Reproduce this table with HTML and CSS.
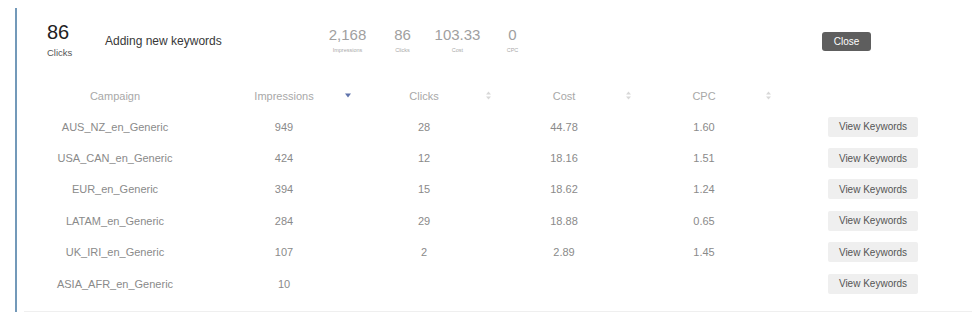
FILE: index.html
```html
<!DOCTYPE html>
<html>
<head>
<meta charset="utf-8">
<link rel="stylesheet" href="styles.css">
</head>
<body>
<div class="panel">
  <div class="inner">
    <div class="header">
      <div class="big">
        <div class="big-num">86</div>
        <div class="big-label">Clicks</div>
      </div>
      <div class="title">Adding new keywords</div>
      <div class="stats">
        <div class="stat"><div class="stat-num">2,168</div><div class="stat-label">Impressions</div></div>
        <div class="stat"><div class="stat-num">86</div><div class="stat-label">Clicks</div></div>
        <div class="stat"><div class="stat-num">103.33</div><div class="stat-label">Cost</div></div>
        <div class="stat"><div class="stat-num">0</div><div class="stat-label">CPC</div></div>
      </div>
      <button class="close">Close</button>
    </div>

    <div class="table">
      <div class="row head">
        <div class="cell first">Campaign</div>
        <div class="cell sortable"><span></span><span>Impressions</span><span class="sort"><svg width="6" height="5" viewBox="0 0 6 5"><path d="M0 0.5h6L3 4.5z" fill="#5f73ab"/></svg></span></div>
        <div class="cell sortable"><span></span><span>Clicks</span><span class="sort"><svg width="5" height="9" viewBox="0 0 5 9"><path d="M0 3.5h5L2.5 0.5zM0 5.5h5L2.5 8.5z" fill="#d8d8d8"/></svg></span></div>
        <div class="cell sortable"><span></span><span>Cost</span><span class="sort"><svg width="5" height="9" viewBox="0 0 5 9"><path d="M0 3.5h5L2.5 0.5zM0 5.5h5L2.5 8.5z" fill="#d8d8d8"/></svg></span></div>
        <div class="cell sortable"><span></span><span>CPC</span><span class="sort"><svg width="5" height="9" viewBox="0 0 5 9"><path d="M0 3.5h5L2.5 0.5zM0 5.5h5L2.5 8.5z" fill="#d8d8d8"/></svg></span></div>
        <div class="cell"></div>
      </div>

      <div class="row">
        <div class="cell first">AUS_NZ_en_Generic</div>
        <div class="cell">949</div><div class="cell">28</div><div class="cell">44.78</div><div class="cell">1.60</div>
        <div class="cell"><button class="view">View Keywords</button></div>
      </div>
      <div class="row">
        <div class="cell first">USA_CAN_en_Generic</div>
        <div class="cell">424</div><div class="cell">12</div><div class="cell">18.16</div><div class="cell">1.51</div>
        <div class="cell"><button class="view">View Keywords</button></div>
      </div>
      <div class="row">
        <div class="cell first">EUR_en_Generic</div>
        <div class="cell">394</div><div class="cell">15</div><div class="cell">18.62</div><div class="cell">1.24</div>
        <div class="cell"><button class="view">View Keywords</button></div>
      </div>
      <div class="row">
        <div class="cell first">LATAM_en_Generic</div>
        <div class="cell">284</div><div class="cell">29</div><div class="cell">18.88</div><div class="cell">0.65</div>
        <div class="cell"><button class="view">View Keywords</button></div>
      </div>
      <div class="row">
        <div class="cell first">UK_IRI_en_Generic</div>
        <div class="cell">107</div><div class="cell">2</div><div class="cell">2.89</div><div class="cell">1.45</div>
        <div class="cell"><button class="view">View Keywords</button></div>
      </div>
      <div class="row">
        <div class="cell first">ASIA_AFR_en_Generic</div>
        <div class="cell">10</div><div class="cell"></div><div class="cell"></div><div class="cell"></div>
        <div class="cell"><button class="view">View Keywords</button></div>
      </div>
    </div>
  </div>
</div>
</body>
</html>
```

FILE: styles.css
```css
html, body {
  margin: 0;
  padding: 0;
  background: #ffffff;
  font-family: "Liberation Sans", Arial, sans-serif;
}

.panel {
  margin: 8px 0 0 15px;
  border-left: 2px solid #7399b9;
  width: 955px;
}

.inner {
  margin-left: 7px;
  width: 948px;
  border-bottom: 1px solid #efefef;
  padding-bottom: 12px;
}

.header {
  display: flex;
  align-items: flex-start;
  height: 72px;
  padding-left: 23px;
}

.big {
  width: 58px;
  margin-top: 14px;
}

.big-num {
  font-size: 20px;
  line-height: 20px;
  color: #222;
}

.big-label {
  font-size: 9.5px;
  line-height: 12px;
  color: #555;
  margin-top: 5px;
}

.title {
  width: 215px;
  margin-top: 25.5px;
  font-size: 12px;
  line-height: 14px;
  color: #383838;
}

.stats {
  display: flex;
  margin-top: 17.5px;
}

.stat {
  width: 55px;
  text-align: center;
}

.stat-num {
  font-size: 15px;
  line-height: 18px;
  color: #a0a0a0;
}

.stat-label {
  font-size: 5.5px;
  line-height: 8px;
  color: #aaa;
  margin-top: 2.5px;
}

.close {
  margin-left: 282px;
  margin-top: 24px;
  width: 49px;
  height: 19px;
  border: 0;
  border-radius: 3px;
  background: #5e5e5e;
  color: #fff;
  font-family: "Liberation Sans", Arial, sans-serif;
  font-size: 10px;
  padding: 0;
}

.table {
  display: flex;
  flex-direction: column;
}

.row {
  display: grid;
  grid-template-columns: 190px 140px 140px 140px 140px 198px;
  height: 31.4px;
  align-items: center;
  font-size: 11px;
  color: #8a8a8a;
}

.row.head {
  height: 31px;
  color: #a8a8a8;
}

.cell {
  text-align: center;
}

.cell.first {
  padding-right: 8px;
}

.sortable {
  display: grid;
  grid-template-columns: 1fr auto 1fr;
  align-items: center;
}

.sort {
  justify-self: end;
  margin-right: 3px;
  display: flex;
}

.view {
  width: 90px;
  height: 20px;
  border: 0;
  border-radius: 2px;
  background: #efefef;
  color: #555;
  font-family: "Liberation Sans", Arial, sans-serif;
  font-size: 10px;
  padding: 0;
}
```
